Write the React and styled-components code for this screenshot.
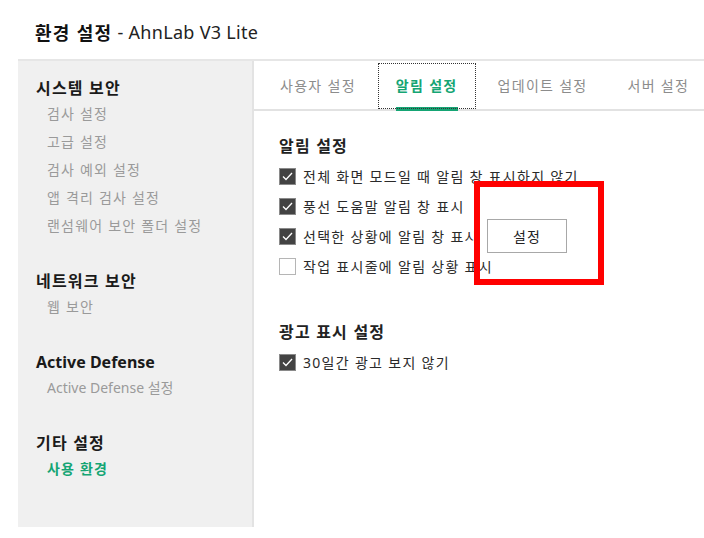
import React from 'react';
import styled, { createGlobalStyle, css } from 'styled-components';

const GREEN = '#15a574';

const GlobalStyle = createGlobalStyle`
  html, body {
    margin: 0;
    padding: 0;
    background: #ffffff;
  }
  body {
    font-family: "Noto Sans", "Noto Sans CJK KR", sans-serif;
    color: #222;
  }
`;

const Page = styled.div`
  width: 704px;
  height: 538px;
  padding-left: 18px;
  box-sizing: border-box;
  overflow: hidden;
`;

const Title = styled.h1`
  margin: 0;
  height: 59px;
  box-sizing: border-box;
  padding: 4px 0 0 17px;
  display: flex;
  align-items: center;
  font-size: 18px;
  font-weight: 400;
  color: #222;
  letter-spacing: 0.3px;
  & strong {
    font-weight: 700;
    color: #111;
    letter-spacing: 1.3px;
    margin-right: 5px;
  }
`;

const Window = styled.div`
  display: flex;
  height: 466px;
  border-top: 2px solid #e6e6e6;
`;

const Sidebar = styled.nav`
  width: 236px;
  flex-shrink: 0;
  box-sizing: border-box;
  background: #f0f0f0;
  border-right: 2px solid #e3e3e3;
  padding: 15px 0 0 18px;
`;

const Group = styled.div`
  & + & {
    margin-top: 29px;
  }
`;

const GroupTitle = styled.div`
  font-size: 16px;
  font-weight: 700;
  line-height: 24px;
  color: #1a1a1a;
  letter-spacing: ${(p) => (p.$latin ? '0' : '1.2px')};
`;

const NavItem = styled.div`
  font-size: 14px;
  line-height: 28px;
  padding-left: 11px;
  letter-spacing: ${(p) => (p.$latin ? '0' : '1.2px')};
  color: ${(p) => (p.$active ? GREEN : '#9a9a9a')};
  font-weight: ${(p) => (p.$active ? 700 : 400)};
`;

const Main = styled.section`
  flex: 1;
  min-width: 0;
  display: flex;
  flex-direction: column;
`;

const TabBar = styled.div`
  height: 50px;
  box-sizing: border-box;
  border-bottom: 2px solid #e2e2e2;
  display: flex;
  padding-left: 6px;
`;

const Tab = styled.div`
  flex-shrink: 0;
  padding: 0 20px;
  margin-bottom: -2px;
  display: flex;
  ${(p) =>
    p.$active &&
    css`
      outline: 1px dotted #333;
      outline-offset: -3px;
    `}
`;

const TabLabel = styled.span`
  display: flex;
  align-items: center;
  white-space: nowrap;
  padding-top: 2px;
  box-sizing: border-box;
  font-size: 14px;
  letter-spacing: 1.3px;
  color: ${(p) => (p.$active ? GREEN : '#8c8c8c')};
  font-weight: ${(p) => (p.$active ? 700 : 400)};
  border-bottom: 4px solid ${(p) => (p.$active ? GREEN : 'transparent')};
`;

const Content = styled.div`
  position: relative;
  padding: 24px 0 0 25px;
`;

const SectionTitle = styled.h2`
  margin: 0 0 4px;
  font-size: 16px;
  font-weight: 700;
  line-height: 22px;
  letter-spacing: 1.2px;
  color: #222;
`;

const Section = styled.div`
  & + & {
    margin-top: 40px;
  }
`;

const Row = styled.label`
  position: relative;
  display: flex;
  align-items: center;
  gap: 7px;
  height: 30px;
  font-size: 14px;
  letter-spacing: 1.3px;
  color: #2a2a2a;
  white-space: nowrap;
`;

const Box = styled.span`
  width: 17px;
  height: 17px;
  box-sizing: border-box;
  flex-shrink: 0;
  display: flex;
  align-items: center;
  justify-content: center;
  background: ${(p) => (p.$checked ? '#434343' : '#ffffff')};
  border: 1px solid ${(p) => (p.$checked ? '#8a8a8a' : '#b5b5b5')};
`;

const Button = styled.button`
  position: absolute;
  left: 208px;
  top: -2px;
  width: 80px;
  height: 34px;
  background: #ffffff;
  border: 1px solid #a8a8a8;
  font-family: inherit;
  font-size: 14px;
  letter-spacing: 1px;
  color: #222;
`;

const Highlight = styled.div`
  position: absolute;
  left: 220px;
  top: 70px;
  width: 130px;
  height: 104px;
  box-sizing: border-box;
  border: 6px solid #ff0000;
  pointer-events: none;
`;

function Check({ checked }) {
  return (
    <Box $checked={checked}>
      {checked && (
        <svg width="11" height="9" viewBox="0 0 11 9">
          <path d="M1 4.5 L4 7.5 L10 1" fill="none" stroke="#fff" strokeWidth="1.3" />
        </svg>
      )}
    </Box>
  );
}

const isLatin = (s) => /[A-Za-z]/.test(s);

const nav = [
  {
    title: '시스템 보안',
    items: ['검사 설정', '고급 설정', '검사 예외 설정', '앱 격리 검사 설정', '랜섬웨어 보안 폴더 설정'],
  },
  { title: '네트워크 보안', items: ['웹 보안'] },
  { title: 'Active Defense', items: ['Active Defense 설정'] },
  { title: '기타 설정', items: ['사용 환경'], active: '사용 환경' },
];

const tabs = ['사용자 설정', '알림 설정', '업데이트 설정', '서버 설정'];

export default function App() {
  return (
    <>
      <GlobalStyle />
      <Page>
        <Title>
          <strong>환경 설정</strong>- AhnLab V3 Lite
        </Title>
        <Window>
          <Sidebar>
            {nav.map((g) => (
              <Group key={g.title}>
                <GroupTitle $latin={isLatin(g.title)}>{g.title}</GroupTitle>
                {g.items.map((it) => (
                  <NavItem key={it} $latin={isLatin(it)} $active={it === g.active}>
                    {it}
                  </NavItem>
                ))}
              </Group>
            ))}
          </Sidebar>
          <Main>
            <TabBar>
              {tabs.map((t) => (
                <Tab key={t} $active={t === '알림 설정'}>
                  <TabLabel $active={t === '알림 설정'}>{t}</TabLabel>
                </Tab>
              ))}
            </TabBar>
            <Content>
              <Section>
                <SectionTitle>알림 설정</SectionTitle>
                <Row>
                  <Check checked />
                  전체 화면 모드일 때 알림 창 표시하지 않기
                </Row>
                <Row>
                  <Check checked />
                  풍선 도움말 알림 창 표시
                </Row>
                <Row>
                  <Check checked />
                  선택한 상황에 알림 창 표시
                  <Button type="button">설정</Button>
                </Row>
                <Row>
                  <Check />
                  작업 표시줄에 알림 상황 표시
                </Row>
              </Section>
              <Section>
                <SectionTitle>광고 표시 설정</SectionTitle>
                <Row>
                  <Check checked />
                  30일간 광고 보지 않기
                </Row>
              </Section>
              <Highlight />
            </Content>
          </Main>
        </Window>
      </Page>
    </>
  );
}
